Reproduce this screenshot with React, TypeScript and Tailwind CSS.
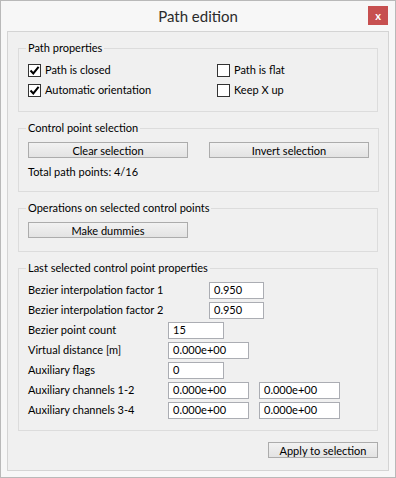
import React from 'react';

const font = { fontFamily: 'Lato, "Noto Sans", Arial, sans-serif' };

const Check: React.FC<{ checked?: boolean; label: string }> = ({ checked, label }) => (
  <label className="flex h-[20px] items-center gap-[4px]">
    <span className="flex h-[13px] w-[13px] items-center justify-center border border-[#333333] bg-white">
      {checked && (
        <svg width="11" height="11" viewBox="0 0 11 11">
          <path d="M1.5 5.5 L4.3 8.4 L9.6 1.8" fill="none" stroke="#000" strokeWidth="2" />
        </svg>
      )}
    </span>
    <span>{label}</span>
  </label>
);

const Button: React.FC<{ children: React.ReactNode; className?: string }> = ({ children, className }) => (
  <button
    className={
      'flex h-[16px] items-center justify-center border border-[#acacac] bg-gradient-to-b from-[#f2f2f2] to-[#e3e3e3] leading-none ' +
      (className ?? '')
    }
  >
    {children}
  </button>
);

const Group: React.FC<{ title: string; children: React.ReactNode; className?: string }> = ({
  title,
  children,
  className,
}) => (
  <fieldset className={'border border-[#dcdcdc] px-[9px] ' + (className ?? '')}>
    <legend className="ml-[-2px] px-[2px] leading-[14px]">{title}</legend>
    {children}
  </fieldset>
);

const Field: React.FC<{ value: string; w: string }> = ({ value, w }) => (
  <div className={'flex h-[17px] items-center border border-[#abadb3] bg-white pl-[4px] ' + w}>{value}</div>
);

const Row: React.FC<{ label: string; labelW: string; children: React.ReactNode }> = ({ label, labelW, children }) => (
  <div className="flex h-[17px] items-center">
    <span className={labelW}>{label}</span>
    <div className="flex gap-[10px]">{children}</div>
  </div>
);

export default function App() {
  return (
    <div
      className="flex h-[478px] w-[396px] flex-col border border-[#b9b9b9] bg-[#f7f7f7] text-[11px] text-black"
      style={font}
    >
      <div className="relative flex h-[30px] items-center justify-center">
        <span className="text-[15px] text-[#2b2b2b]">Path edition</span>
        <span className="absolute right-[7px] top-[5px] flex h-[19px] w-[20px] items-center justify-center bg-[#c75050] text-[11px] font-bold leading-none text-white">
          x
        </span>
      </div>
      <div className="mx-[6px] flex flex-1 flex-col border border-[#d4d4d4] bg-[#f0f0f0] px-[10px] pt-[9px] mb-[6px]">
        <Group title="Path properties" className="pb-[11px] pt-[5px]">
          <div className="grid grid-cols-[189px_1fr]">
            <Check checked label="Path is closed" />
            <Check label="Path is flat" />
            <Check checked label="Automatic orientation" />
            <Check label="Keep X up" />
          </div>
        </Group>

        <Group title="Control point selection" className="mt-[9px] pb-[12px] pt-[7px]">
          <div className="flex gap-[21px]">
            <Button className="w-[160px]">Clear selection</Button>
            <Button className="w-[160px]">Invert selection</Button>
          </div>
          <div className="mt-[7px] leading-[14px]">Total path points: 4/16</div>
        </Group>

        <Group title="Operations on selected control points" className="mt-[9px] pb-[13px] pt-[7px]">
          <Button className="w-[160px]">Make dummies</Button>
        </Group>

        <Group title="Last selected control point properties" className="mt-[9px] pb-[11px] pt-[7px]">
          <div className="flex flex-col gap-[3px]">
            <Row label="Bezier interpolation factor 1" labelW="w-[181px]">
              <Field value="0.950" w="w-[55px]" />
            </Row>
            <Row label="Bezier interpolation factor 2" labelW="w-[181px]">
              <Field value="0.950" w="w-[55px]" />
            </Row>
            <Row label="Bezier point count" labelW="w-[140px]">
              <Field value="15" w="w-[56px]" />
            </Row>
            <Row label="Virtual distance [m]" labelW="w-[140px]">
              <Field value="0.000e+00" w="w-[81px]" />
            </Row>
            <Row label="Auxiliary flags" labelW="w-[140px]">
              <Field value="0" w="w-[56px]" />
            </Row>
            <Row label="Auxiliary channels 1-2" labelW="w-[140px]">
              <Field value="0.000e+00" w="w-[81px]" />
              <Field value="0.000e+00" w="w-[81px]" />
            </Row>
            <Row label="Auxiliary channels 3-4" labelW="w-[140px]">
              <Field value="0.000e+00" w="w-[81px]" />
              <Field value="0.000e+00" w="w-[81px]" />
            </Row>
          </div>
        </Group>

        <div className="mt-[11px] flex justify-end">
          <Button className="w-[110px]">Apply to selection</Button>
        </div>
      </div>
    </div>
  );
}
